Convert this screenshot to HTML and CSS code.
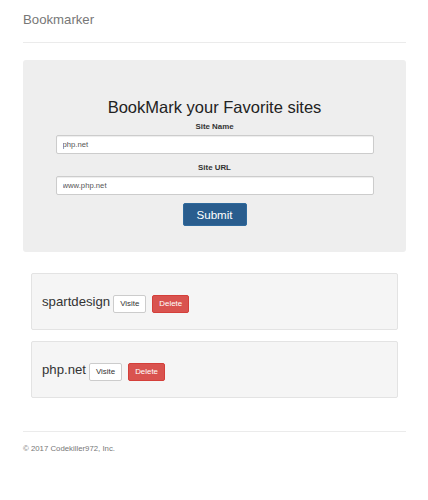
FILE: index.html
```html
<!DOCTYPE html>
<html>
<head>
<meta charset="utf-8">
<title>Bookmarker</title>
<link rel="stylesheet" href="styles.css">
</head>
<body>
<div class="container">
  <header class="header">
    <h3 class="brand">Bookmarker</h3>
  </header>

  <section class="jumbotron">
    <h2 class="title">BookMark your Favorite sites</h2>
    <form class="form">
      <div class="form-group">
        <label class="label">Site Name</label>
        <input class="input" type="text" value="php.net">
      </div>
      <div class="form-group">
        <label class="label">Site URL</label>
        <input class="input" type="text" value="www.php.net">
      </div>
      <button class="btn-submit" type="button">Submit</button>
    </form>
  </section>

  <section class="list">
    <div class="well">
      <span class="site-name">spartdesign</span>
      <a class="btn btn-default">Visite</a>
      <a class="btn btn-danger">Delete</a>
    </div>
    <div class="well">
      <span class="site-name">php.net</span>
      <a class="btn btn-default">Visite</a>
      <a class="btn btn-danger">Delete</a>
    </div>
  </section>

  <footer class="footer">
    <p class="copy">© 2017 Codekiller972, Inc.</p>
  </footer>
</div>
</body>
</html>
```

FILE: styles.css
```css
* { box-sizing: border-box; }
html, body { margin: 0; padding: 0; background: #fff; }
body {
  font-family: "Liberation Sans", Arial, sans-serif;
  font-size: 7.7px;
  line-height: 1.43;
  color: #333;
}
.container {
  width: 383px;
  margin-left: 23px;
}
.header {
  padding-top: 12px;
  padding-bottom: 15px;
  border-bottom: 1px solid #ebebeb;
}
.brand {
  margin: 0;
  font-size: 13.2px;
  line-height: 15px;
  font-weight: normal;
  color: #777;
}
.jumbotron {
  margin-top: 17px;
  background: #eee;
  border-radius: 3px;
  padding: 38px 0 26px;
  text-align: center;
}
.title {
  margin: 0 0 5px;
  font-size: 16.5px;
  line-height: 18px;
  font-weight: normal;
  color: #222;
}
.form {
  display: flex;
  flex-direction: column;
  align-items: center;
}
.form-group {
  width: 318px;
  margin-bottom: 8px;
  display: flex;
  flex-direction: column;
  align-items: center;
}
.label {
  font-weight: bold;
  font-size: 7.9px;
  line-height: 11px;
  margin-bottom: 3px;
  color: #333;
}
.input {
  width: 318px;
  height: 19px;
  border: 1px solid #ccc;
  border-radius: 2px;
  background: #fff;
  padding: 0 6px;
  font-family: "Liberation Sans", Arial, sans-serif;
  font-size: 7.7px;
  color: #555;
  box-shadow: inset 0 1px 1px rgba(0,0,0,.075);
  outline: none;
}
.btn-submit {
  width: 64px;
  height: 23px;
  padding: 0;
  border: 1px solid #2f6a9d;
  border-radius: 2px;
  background: #295d8e;
  color: #fff;
  font-family: "Liberation Sans", Arial, sans-serif;
  font-size: 11.6px;
}
.list {
  margin-top: 21px;
  padding: 0 8px;
  display: flex;
  flex-direction: column;
  gap: 11px;
}
.well {
  height: 57px;
  background: #f5f5f5;
  border: 1px solid #e3e3e3;
  border-radius: 2px;
  padding: 20px 10px 0;
  display: flex;
  align-items: baseline;
}
.site-name {
  font-size: 13.2px;
  line-height: 15px;
  color: #333;
}
.btn {
  display: inline-flex;
  align-items: center;
  height: 18px;
  padding: 0 6px;
  border: 1px solid transparent;
  border-radius: 2px;
  font-size: 7.9px;
  line-height: 11px;
}
.btn-default {
  margin-left: 3px;
  background: #fff;
  border-color: #ccc;
  color: #333;
}
.btn-danger {
  margin-left: 6px;
  background: #d9534f;
  border-color: #d43f3a;
  color: #fff;
}
.footer {
  margin-top: 33px;
  border-top: 1px solid #ebebeb;
  padding-top: 11px;
}
.copy {
  margin: 0;
  font-size: 7.8px;
  line-height: 11px;
  color: #777;
}
```
